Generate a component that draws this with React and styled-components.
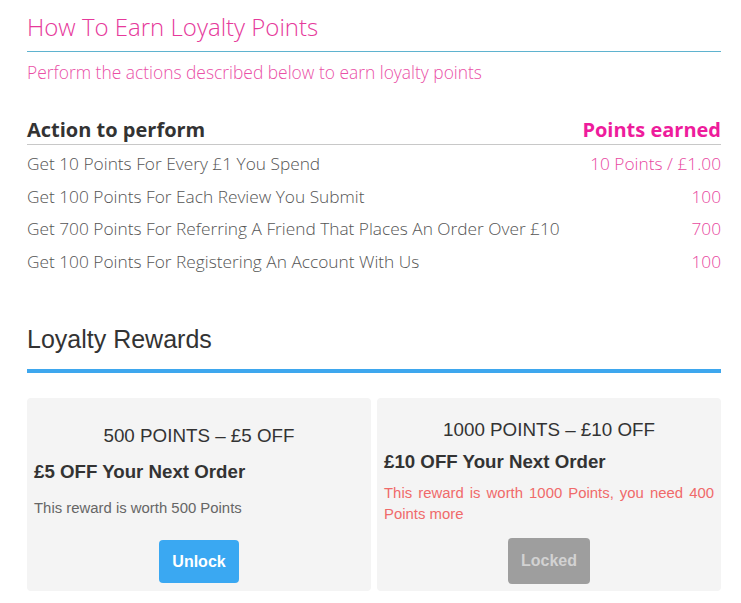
import React from 'react';
import styled, { createGlobalStyle } from 'styled-components';

const GlobalStyle = createGlobalStyle`
  body {
    margin: 0;
    background: #ffffff;
  }
`;

const Page = styled.div`
  padding: 10px 20px 12px 27px;
`;

const EarnSection = styled.section`
  font-family: "Open Sans", "Segoe UI", sans-serif;
  font-weight: 300;
`;

const EarnTitle = styled.h2`
  margin: 0;
  padding-bottom: 7px;
  font-size: 24px;
  font-weight: 300;
  line-height: 34px;
  color: #e6399b;
  border-bottom: 1px solid #5fb3cf;
`;

const EarnIntro = styled.p`
  margin: 8px 0 0;
  font-size: 17.4px;
  line-height: 24px;
  color: #ea4fa6;
`;

const PointsTable = styled.div`
  margin-top: 32px;
`;

const TableRow = styled.div`
  display: flex;
  justify-content: space-between;
  align-items: baseline;
  height: 32.6px;
  line-height: 32.6px;
  font-size: 17.3px;
`;

const HeadRow = styled(TableRow)`
  height: 28px;
  line-height: 28px;
  font-size: 20px;
  font-weight: 700;
  border-bottom: 1px solid #c8c8c8;
  margin-bottom: 3px;
`;

const ActionCell = styled.span`
  color: ${p => (p.$head ? '#333333' : '#555555')};
`;

const PointsCell = styled.span`
  color: ${p => (p.$head ? '#ee1c9c' : '#e8489f')};
  text-align: right;
`;

const RewardsTitle = styled.h2`
  margin: 46px 0 0;
  padding-bottom: 14px;
  font-family: "Liberation Sans", Arial, sans-serif;
  font-size: 25px;
  font-weight: 400;
  line-height: 31px;
  color: #333333;
  border-bottom: 4px solid #3ea7ee;
`;

const CardGrid = styled.div`
  display: grid;
  grid-template-columns: 1fr 1fr;
  gap: 6px;
  margin-top: 25px;
`;

const Card = styled.div`
  display: flex;
  flex-direction: column;
  height: 193px;
  box-sizing: border-box;
  padding: ${p => p.$top}px 7px 0;
  background: #f4f4f4;
  border-radius: 4px;
  font-family: "Liberation Sans", Arial, sans-serif;
`;

const RewardName = styled.div`
  text-align: center;
  font-size: 18.8px;
  line-height: 22px;
  color: #333333;
`;

const RewardHeading = styled.div`
  margin-top: ${p => p.$gap}px;
  font-size: 18.7px;
  font-weight: 700;
  line-height: 22px;
  color: #333333;
`;

const RewardNote = styled.p`
  margin: ${p => p.$gap}px 0 0;
  font-size: 14.9px;
  line-height: 21px;
  text-align: justify;
  color: ${p => (p.$locked ? '#f06a6a' : '#666666')};
`;

const RewardButton = styled.button`
  align-self: center;
  margin-top: ${p => p.$gap}px;
  padding: 0 13px;
  height: ${p => (p.$locked ? 46 : 43)}px;
  border: none;
  border-radius: 4px;
  font-family: "Liberation Sans", Arial, sans-serif;
  font-size: 16px;
  font-weight: 700;
  background: ${p => (p.$locked ? '#9e9e9e' : '#3aa8f2')};
  color: ${p => (p.$locked ? '#d2d2d2' : '#ffffff')};
  cursor: ${p => (p.$locked ? 'default' : 'pointer')};
`;

const actions = [
  { text: 'Get 10 Points For Every £1 You Spend', points: '10 Points / £1.00' },
  { text: 'Get 100 Points For Each Review You Submit', points: '100' },
  { text: 'Get 700 Points For Referring A Friend That Places An Order Over £10', points: '700' },
  { text: 'Get 100 Points For Registering An Account With Us', points: '100' },
];

const rewards = [
  {
    name: '500 POINTS – £5 OFF',
    heading: '£5 OFF Your Next Order',
    note: 'This reward is worth 500 Points',
    locked: false,
    top: 27,
    gap: 14,
    noteGap: 15,
    buttonGap: 21,
  },
  {
    name: '1000 POINTS – £10 OFF',
    heading: '£10 OFF Your Next Order',
    note: 'This reward is worth 1000 Points, you need 400 Points more',
    locked: true,
    top: 21,
    gap: 10,
    noteGap: 10,
    buttonGap: 13,
  },
];

const App = () => (
  <Page>
    <GlobalStyle />
    <EarnSection>
      <EarnTitle>How To Earn Loyalty Points</EarnTitle>
      <EarnIntro>Perform the actions described below to earn loyalty points</EarnIntro>
      <PointsTable>
        <HeadRow>
          <ActionCell $head>Action to perform</ActionCell>
          <PointsCell $head>Points earned</PointsCell>
        </HeadRow>
        {actions.map(a => (
          <TableRow key={a.text}>
            <ActionCell>{a.text}</ActionCell>
            <PointsCell>{a.points}</PointsCell>
          </TableRow>
        ))}
      </PointsTable>
    </EarnSection>

    <RewardsTitle>Loyalty Rewards</RewardsTitle>
    <CardGrid>
      {rewards.map(r => (
        <Card key={r.name} $top={r.top}>
          <RewardName>{r.name}</RewardName>
          <RewardHeading $gap={r.gap}>{r.heading}</RewardHeading>
          <RewardNote $gap={r.noteGap} $locked={r.locked}>{r.note}</RewardNote>
          <RewardButton $gap={r.buttonGap} $locked={r.locked} disabled={r.locked}>
            {r.locked ? 'Locked' : 'Unlock'}
          </RewardButton>
        </Card>
      ))}
    </CardGrid>
  </Page>
);

export default App;
